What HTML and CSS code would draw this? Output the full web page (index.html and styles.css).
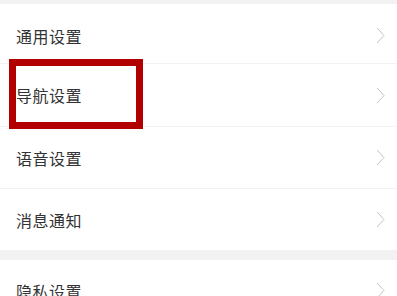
FILE: index.html
```html
<!DOCTYPE html>
<html lang="zh-CN">
<head>
  <meta charset="UTF-8">
  <meta name="viewport" content="width=device-width, initial-scale=1.0">
  <title>设置</title>
  <link rel="stylesheet" href="styles.css">
</head>
<body>

  <div class="gap top"></div>
  <div class="group">
    <div class="row first">
      <span class="label">通用设置</span>
      <svg class="arrow" viewBox="0 0 9 17"><path d="M1 1 L8 8.5 L1 16"/></svg>
    </div>
    <div class="row marked">
      <span class="label">导航设置</span>
      <svg class="arrow" viewBox="0 0 9 17"><path d="M1 1 L8 8.5 L1 16"/></svg>
      <div class="highlight"></div>
    </div>
    <div class="row">
      <span class="label">语音设置</span>
      <svg class="arrow" viewBox="0 0 9 17"><path d="M1 1 L8 8.5 L1 16"/></svg>
    </div>
    <div class="row">
      <span class="label">消息通知</span>
      <svg class="arrow" viewBox="0 0 9 17"><path d="M1 1 L8 8.5 L1 16"/></svg>
    </div>
  </div>
  <div class="gap"></div>
  <div class="group">
    <div class="row">
      <span class="label">隐私设置</span>
      <svg class="arrow" viewBox="0 0 9 17"><path d="M1 1 L8 8.5 L1 16"/></svg>
    </div>
  </div>

</body>
</html>
```

FILE: styles.css
```css
body {
  margin: 0;
  background-color: #ffffff;
  font-family: "Noto Sans CJK SC", "Noto Sans", sans-serif;
  overflow: hidden;
}

.gap {
  height: 10px;
  background-color: #f2f2f2;
}

.gap.top {
  height: 4px;
}

.group {
  background-color: #ffffff;
}

.row {
  position: relative;
  display: flex;
  justify-content: space-between;
  align-items: center;
  height: 61px;
  padding: 0 12px 0 16px;
  border-top: 1px solid #f3f3f3;
}

.group .row:first-child {
  border-top: none;
}

.row.first {
  height: 55px;
  padding-top: 4px;
}

.row.marked {
  height: 62px;
}

.label {
  font-size: 16px;
  letter-spacing: 0.5px;
  color: #333333;
}

.arrow {
  width: 9px;
  height: 17px;
}

.arrow path {
  fill: none;
  stroke: #c4c4c4;
  stroke-width: 1;
}

/* red annotation box */
.highlight {
  position: absolute;
  z-index: 2;
  left: 9px;
  top: -5px;
  width: 120px;
  height: 56px;
  border: 7px solid #b20000;
}
```
